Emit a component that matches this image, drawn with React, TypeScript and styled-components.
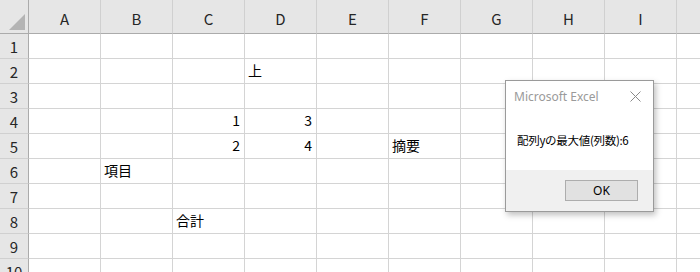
import React from "react";
import styled, { createGlobalStyle } from "styled-components";

const COLS = ["A", "B", "C", "D", "E", "F", "G", "H", "I", ""];
const ROWS = 10;

type CellValue = { text: string; align?: "left" | "right" };

const cells: Record<string, CellValue> = {
  D2: { text: "上" },
  C4: { text: "1", align: "right" },
  D4: { text: "3", align: "right" },
  C5: { text: "2", align: "right" },
  D5: { text: "4", align: "right" },
  F5: { text: "摘要" },
  B6: { text: "項目" },
  C8: { text: "合計" },
};

const GlobalStyle = createGlobalStyle`
  html, body {
    margin: 0;
    padding: 0;
    background: #ffffff;
    overflow: hidden;
  }
`;

function App() {
  return (
    <Page>
      <GlobalStyle />
      <Sheet>
        <Corner>
          <CornerMark />
        </Corner>
        {COLS.map((c, i) => (
          <ColHead key={i}>{c}</ColHead>
        ))}
        {Array.from({ length: ROWS }, (_, i) => i + 1).map((r) => (
          <React.Fragment key={r}>
            <RowHead>{r}</RowHead>
            {COLS.map((c, i) => {
              const v = c ? cells[c + r] : undefined;
              return (
                <Cell key={i} $align={v?.align}>
                  {v?.text}
                </Cell>
              );
            })}
          </React.Fragment>
        ))}
      </Sheet>

      <Dialog>
        <TitleBar>
          <Title>Microsoft Excel</Title>
          <CloseIcon width="11" height="11" viewBox="0 0 11 11">
            <path d="M0.5 0.5 L10.5 10.5 M10.5 0.5 L0.5 10.5" stroke="#8a8a8a" strokeWidth="1" />
          </CloseIcon>
        </TitleBar>
        <Message>配列yの最大値(列数):6</Message>
        <Footer>
          <OkButton>OK</OkButton>
        </Footer>
      </Dialog>
    </Page>
  );
}

const Page = styled.div`
  position: relative;
  width: 700px;
  height: 272px;
  overflow: hidden;
  font-family: "Noto Sans CJK JP", "Noto Sans", sans-serif;
`;

const Sheet = styled.div`
  display: grid;
  grid-template-columns: 29px repeat(10, 72px);
  grid-template-rows: 34px repeat(10, 25px);
`;

const Corner = styled.div`
  position: relative;
  background: #e6e6e6;
  border-right: 1px solid #ababab;
  border-bottom: 1px solid #ababab;
`;

const CornerMark = styled.div`
  position: absolute;
  right: 3px;
  bottom: 3px;
  width: 0;
  height: 0;
  border-left: 16px solid transparent;
  border-bottom: 16px solid #b4b4b4;
`;

const ColHead = styled.div`
  display: flex;
  align-items: center;
  justify-content: center;
  padding-top: 3px;
  box-sizing: border-box;
  background: #e6e6e6;
  border-right: 1px solid #d0d0d0;
  border-bottom: 1px solid #ababab;
  color: #262626;
  font-size: 15px;
`;

const RowHead = styled.div`
  display: flex;
  align-items: center;
  justify-content: center;
  background: #e6e6e6;
  border-right: 1px solid #ababab;
  border-bottom: 1px solid #d0d0d0;
  color: #262626;
  font-size: 15px;
`;

const Cell = styled.div<{ $align?: "left" | "right" }>`
  display: flex;
  align-items: center;
  justify-content: ${(p) => (p.$align === "right" ? "flex-end" : "flex-start")};
  padding: 0 4px 2px 3px;
  box-sizing: border-box;
  border-right: 1px solid #d4d4d4;
  border-bottom: 1px solid #d4d4d4;
  font-size: 14px;
  color: #000000;
  white-space: nowrap;
`;

const Dialog = styled.div`
  position: absolute;
  left: 505px;
  top: 80px;
  width: 149px;
  height: 132px;
  box-sizing: border-box;
  border: 1px solid #9a9a9a;
  background: #ffffff;
  box-shadow: 2px 3px 6px rgba(0, 0, 0, 0.25);
  display: flex;
  flex-direction: column;
`;

const TitleBar = styled.div`
  display: flex;
  align-items: center;
  justify-content: space-between;
  height: 30px;
  padding: 0 12px 0 8px;
`;

const Title = styled.span`
  font-family: "Noto Sans", "Liberation Sans", sans-serif;
  font-size: 12px;
  color: #9a9a9a;
`;

const CloseIcon = styled.svg`
  display: block;
`;

const Message = styled.div`
  flex: 1;
  display: flex;
  align-items: center;
  padding: 0 0 2px 11px;
  font-size: 11.5px;
  color: #000000;
  letter-spacing: -0.3px;
`;

const Footer = styled.div`
  height: 41px;
  background: #f0f0f0;
  display: flex;
  justify-content: flex-end;
  align-items: flex-start;
  padding: 10px 15px 0 0;
  box-sizing: border-box;
`;

const OkButton = styled.div`
  width: 73px;
  height: 21px;
  box-sizing: border-box;
  border: 1px solid #adadad;
  background: #e1e1e1;
  display: flex;
  align-items: center;
  justify-content: center;
  font-family: "Noto Sans", "Liberation Sans", sans-serif;
  font-size: 12px;
  color: #000000;
`;

export default App;
